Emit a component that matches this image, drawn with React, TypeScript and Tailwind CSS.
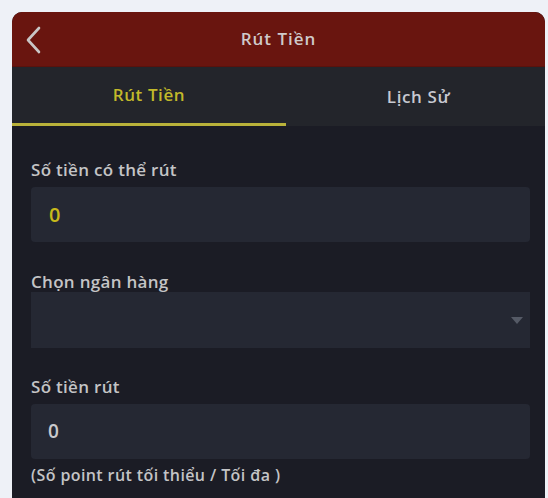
import React from "react";

export default function App() {
  const font = { fontFamily: "'Open Sans', 'Noto Sans', sans-serif" };
  return (
    <div className="w-[548px] h-[498px] bg-[#eef1f7] pt-[12px] pl-[12px] pr-[3px] overflow-hidden" style={font}>
      <div className="h-[486px] bg-[#1b1c25] rounded-t-[10px] overflow-hidden flex flex-col">
        {/* Header */}
        <div className="h-[55px] bg-[#69150f] border-b border-[#5a120d] flex items-center relative">
          <svg className="absolute left-[12px] top-[14px]" width="18" height="28" viewBox="0 0 18 28" fill="none">
            <path d="M15 2 L4 14 L15 26" stroke="#c9c6c6" strokeWidth="2.6" strokeLinecap="round" strokeLinejoin="round" />
          </svg>
          <div className="flex-1 text-center text-[17px] font-semibold tracking-[1px] text-[#cfcaca]">Rút Tiền</div>
        </div>
        {/* Tabs */}
        <div className="h-[59px] bg-[#23252b] flex">
          <div className="w-[274px] flex items-center justify-center text-[17px] font-semibold tracking-[0.6px] text-[#c2b92a] border-b-[3px] border-[#b9b23a]">
            Rút Tiền
          </div>
          <div className="flex-1 flex items-center justify-center text-[17px] font-semibold tracking-[0.6px] text-[#c7c9d1] pl-[6px]">
            Lịch Sử
          </div>
        </div>
        {/* Content */}
        <div className="pl-[19px] pr-[15px] pt-[33px] flex flex-col">
          <div className="text-[17px] font-semibold tracking-[0.3px] text-[#c4c4c6] leading-[21px]">Số tiền có thể rút</div>
          <div className="mt-[7px] h-[55px] bg-[#252833] rounded-[4px] flex items-center pl-[18px] text-[20px] font-semibold text-[#c7b91b]">
            0
          </div>
          <div className="mt-[29px] text-[17px] font-semibold tracking-[0.3px] text-[#c4c4c6] leading-[21px]">Chọn ngân hàng</div>
          <div className="h-[56px] bg-[#252833] flex items-center justify-end pr-[7px]">
            <svg width="12" height="7" viewBox="0 0 12 7">
              <path d="M0 0 L12 0 L6 7 Z" fill="#555a66" />
            </svg>
          </div>
          <div className="mt-[28px] text-[17px] font-semibold tracking-[0.3px] text-[#c4c4c6] leading-[21px]">Số tiền rút</div>
          <div className="mt-[7px] h-[55px] bg-[#252833] rounded-[4px] flex items-center pl-[17px] text-[19px] font-semibold text-[#c9c9cc]">
            0
          </div>
          <div className="mt-[6px] text-[16px] font-semibold tracking-[0.4px] text-[#c4c4c6] leading-[21px]">(Số point rút tối thiểu / Tối đa )</div>
        </div>
      </div>
    </div>
  );
}
